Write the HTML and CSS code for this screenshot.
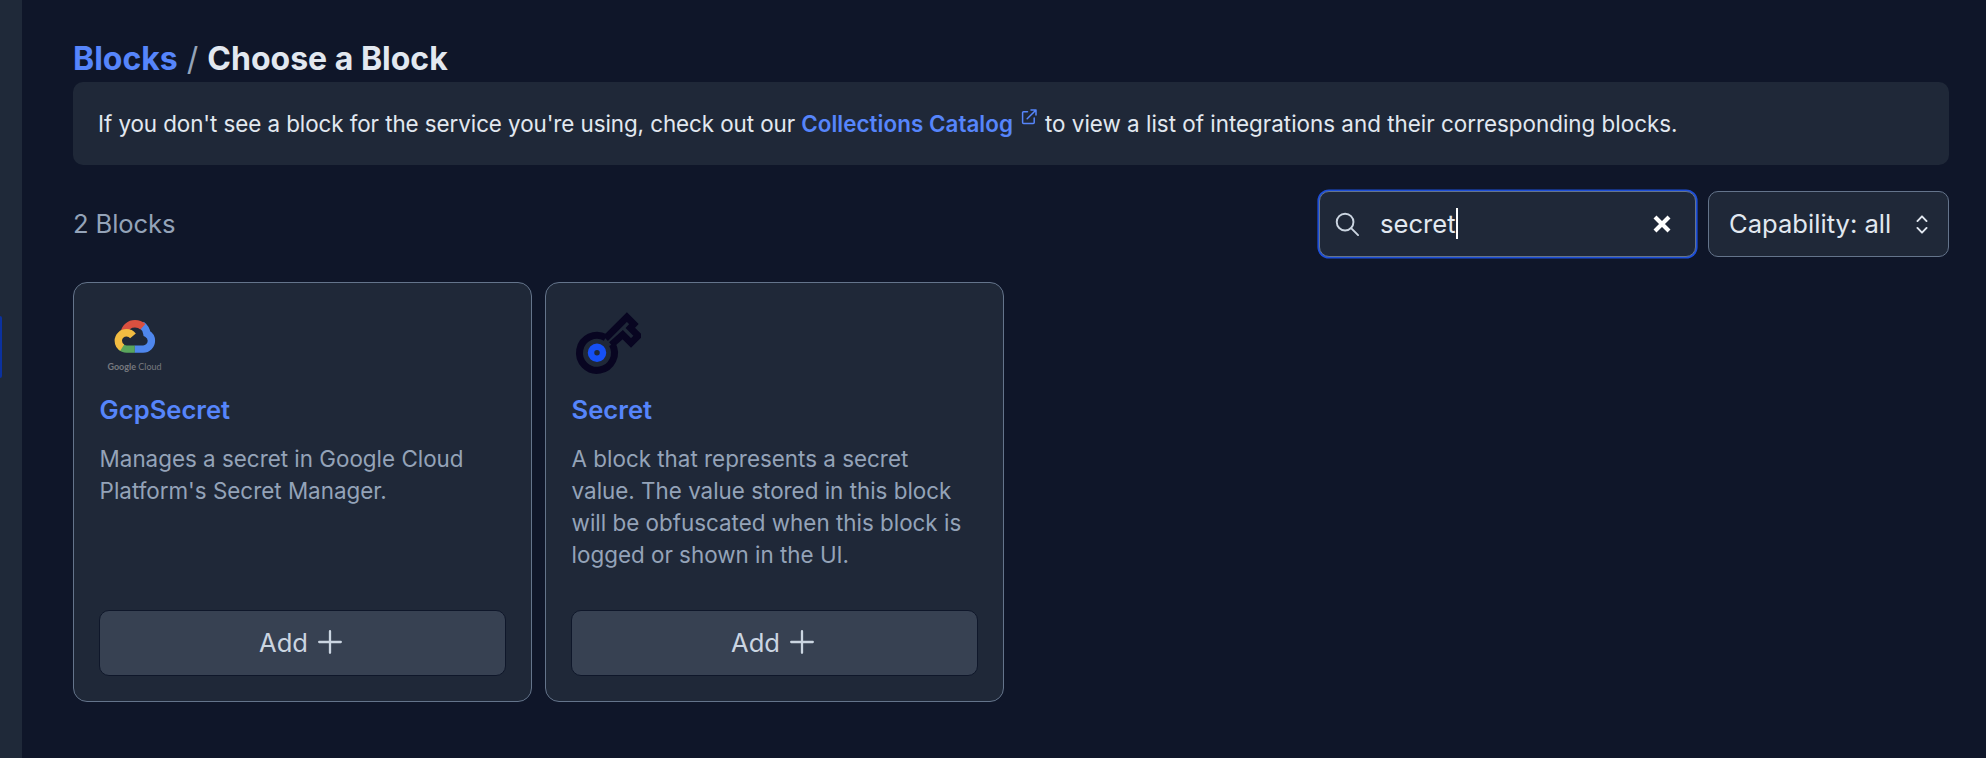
FILE: index.html
```html
<!DOCTYPE html>
<html lang="en">
<head>
<meta charset="utf-8">
<title>Choose a Block</title>
<link rel="stylesheet" href="styles.css">
</head>
<body>
<div class="app">
  <aside class="sidebar"><span class="sidebar-active"></span></aside>
  <main class="content">
    <h1 class="crumbs"><a class="link crumb-link">Blocks</a><span class="slash">/</span><span class="crumb-current">Choose a Block</span></h1>
    <section class="banner">
      <span class="banner-before">If you don't see a block for the service you're using, check out our</span>
      <a class="link catalog">Collections Catalog</a>
      <svg class="external" viewBox="0 0 16 16" fill="none" stroke="currentColor" stroke-width="1.5" stroke-linecap="round" stroke-linejoin="round"><path d="M6.5 2.8H2.6a1 1 0 0 0-1 1v9.6a1 1 0 0 0 1 1h9.6a1 1 0 0 0 1-1V9M10 1h5v5M15 1 6.2 9.8"/></svg>
      <span class="banner-after">to view a list of integrations and their corresponding blocks.</span>
    </section>
    <div class="toolbar">
      <span class="count">2 Blocks</span>
      <div class="search">
        <svg class="search-icon" viewBox="0 0 26 26" fill="none" stroke="currentColor" stroke-width="2" stroke-linecap="round"><circle cx="10.5" cy="10.5" r="8.7"/><path d="m17 17 7 7"/></svg>
        <span class="query">secret</span><span class="caret"></span>
        <svg class="clear" viewBox="0 0 18 18" stroke="currentColor" stroke-width="4.2"><path d="m2 2 14 14M16 2 2 16"/></svg>
      </div>
      <div class="select">
        <span class="select-label">Capability: all</span>
        <svg class="chevrons" viewBox="0 0 12 20" fill="none" stroke="currentColor" stroke-width="2" stroke-linecap="round" stroke-linejoin="round"><path d="m1.2 6.4 4.8-5 4.8 5M1.2 13.6l4.8 5 4.8-5"/></svg>
      </div>
    </div>
    <div class="cards">
      <article class="card">
        <svg class="logo" viewBox="-1 -1 70 70">
          <g fill="none" stroke-width="7.4">
            <path stroke="#4f87ed" d="M41.5 17.8c3.2 2.4 4.8 5.2 5.4 8.7 2.9 1.6 4.5 4.2 4.5 7.3a8.3 8.3 0 0 1-8.3 8.3H34.5"/>
            <path stroke="#59a55c" d="M34.7 42.1H26.6q-3.6 0-6-2.400"/>
            <path stroke="#da5040" d="M24.300 25.500c.9-4.900 5.100-8.700 10.700-8.700 3.200 0 5.800 1 7.900 2.900"/>
            <path stroke="#f1bc42" d="M22.200 40.700a8.300 8.300 0 0 1-3.900-6.900c0-4.600 3.700-8 8.300-8 2.500 0 4.800 1.100 6.400 3"/>
          </g>
          <text class="logo-text" x="7.500" y="62.500" textLength="54" lengthAdjust="spacingAndGlyphs"><tspan class="logo-strong">Google</tspan> Cloud</text>
        </svg>
        <h2 class="link card-title">GcpSecret</h2>
        <p class="description">Manages a secret in Google Cloud Platform's Secret Manager.</p>
        <button class="add">Add<svg class="plus" viewBox="0 0 24 24" stroke="currentColor" stroke-width="2.300" stroke-linecap="round"><path d="M12 1.200v21.600M1.200 12h21.600"/></svg></button>
      </article>
      <article class="card">
        <svg class="logo" viewBox="0 0 70 70" fill="none">
          <path stroke="#080521" stroke-width="6.800" d="M34.500 32.500 55.900 11.100 62.900 18.100 59.300 21.900 67.200 29.800 60 37 51.700 28.700 40.300 38.700"/>
          <path stroke="#080521" stroke-width="7" d="M34.600 31.600A17.500 17.500 0 1 0 41.200 38.200"/>
          <circle cx="26" cy="46.700" r="6" stroke="#1650f5" stroke-width="6.500"/>
        </svg>
        <h2 class="link card-title">Secret</h2>
        <p class="description">A block that represents a secret value. The value stored in this block will be obfuscated when this block is logged or shown in the UI.</p>
        <button class="add">Add<svg class="plus" viewBox="0 0 24 24" stroke="currentColor" stroke-width="2.300" stroke-linecap="round"><path d="M12 1.200v21.600M1.200 12h21.600"/></svg></button>
      </article>
    </div>
  </main>
</div>
</body>
</html>
```
FILE: styles.css
```css
* { box-sizing: border-box; }
body {
  margin: 0;
  background: #0f1629;
  color: #e2e8f0;
  font-family: Inter, "Liberation Sans", sans-serif;
  font-size: 25.6px;
}
.app { display: flex; height: 758px; overflow: hidden; }
.sidebar { width: 22px; flex: none; background: #1f2939; padding-top: 316px; }
.sidebar-active { display: block; width: 2px; height: 62px; background: #0b319f; border-radius: 0 2px 2px 0; }
.content { flex: 1; padding: 38px 37px 0 51px; }
.link { color: #5685fb; }
.crumbs {
  display: flex;
  height: 44px;
  margin: 0;
  padding-bottom: 3px;
  align-items: center;
  font-size: 32px;
  font-weight: 700;
  line-height: 40px;
}
.slash { color: #94a3b8; font-weight: 400; margin: 0 9px; }
.banner {
  display: flex;
  align-items: center;
  height: 83px;
  padding: 0 25px;
  border-radius: 10px;
  background: #1f2838;
  font-size: 22.4px;
  white-space: nowrap;
}
.banner-before { letter-spacing: -0.07px; }
.catalog { font-weight: 600; letter-spacing: 0.05px; margin-left: 6px; }
.external { width: 16px; height: 16px; margin: -14px 8px 0 8px; color: #5685fb; }
.toolbar { display: flex; align-items: center; gap: 12px; height: 66px; margin-top: 26px; }
.count { color: #94a3b8; margin-right: auto; padding-bottom: 2px; letter-spacing: -0.1px; }
.search, .select {
  display: flex;
  align-items: center;
  height: 66px;
  border: 1px solid #64748b;
  border-radius: 10px;
  background: #1f2838;
}
.search { width: 377px; padding: 0 24px 0 15px; box-shadow: 0 0 0 1.6px #1d4ed8; }
.search-icon { width: 25px; height: 25px; color: #cbd5e1; margin-right: 20px; }
.query, .select-label { padding-bottom: 2px; }
.caret { width: 2px; height: 31px; background: #fff; margin-bottom: 1px; }
.clear { width: 18px; height: 18px; margin-left: auto; color: #fff; }
.select { width: 241px; padding: 0 20px; justify-content: space-between; }
.chevrons { width: 12px; height: 19px; }
.cards { display: flex; gap: 13px; margin-top: 25px; }
.card {
  display: flex;
  flex-direction: column;
  width: 459px;
  height: 420px;
  padding: 25px;
  border: 1px solid #64748b;
  border-radius: 14px;
  background: #1f2838;
}
.logo { width: 70px; height: 70px; margin-top: -2px; }
.logo-text { font: 9px Lato, sans-serif; fill: #77797f; }
.logo-strong { font-weight: 700; }
.card-title { margin: 15px 0 0; padding-left: 0.6px; font-size: 25.6px; font-weight: 600; line-height: 38px; }
.description { margin: 14px 0 0; padding: 0 10px 0 0.6px; color: #94a3b8; font-size: 22.4px; line-height: 32px; }
.add {
  display: flex;
  align-items: center;
  justify-content: center;
  gap: 10px;
  height: 66px;
  margin: auto 0 0;
  padding: 0 4px 2px 0;
  border: 1px solid #0f172a;
  border-radius: 10px;
  background: #374152;
  color: #cbd5e1;
  font: 25.6px Inter, "Liberation Sans", sans-serif;
}
.plus { width: 24px; height: 24px; }
```
